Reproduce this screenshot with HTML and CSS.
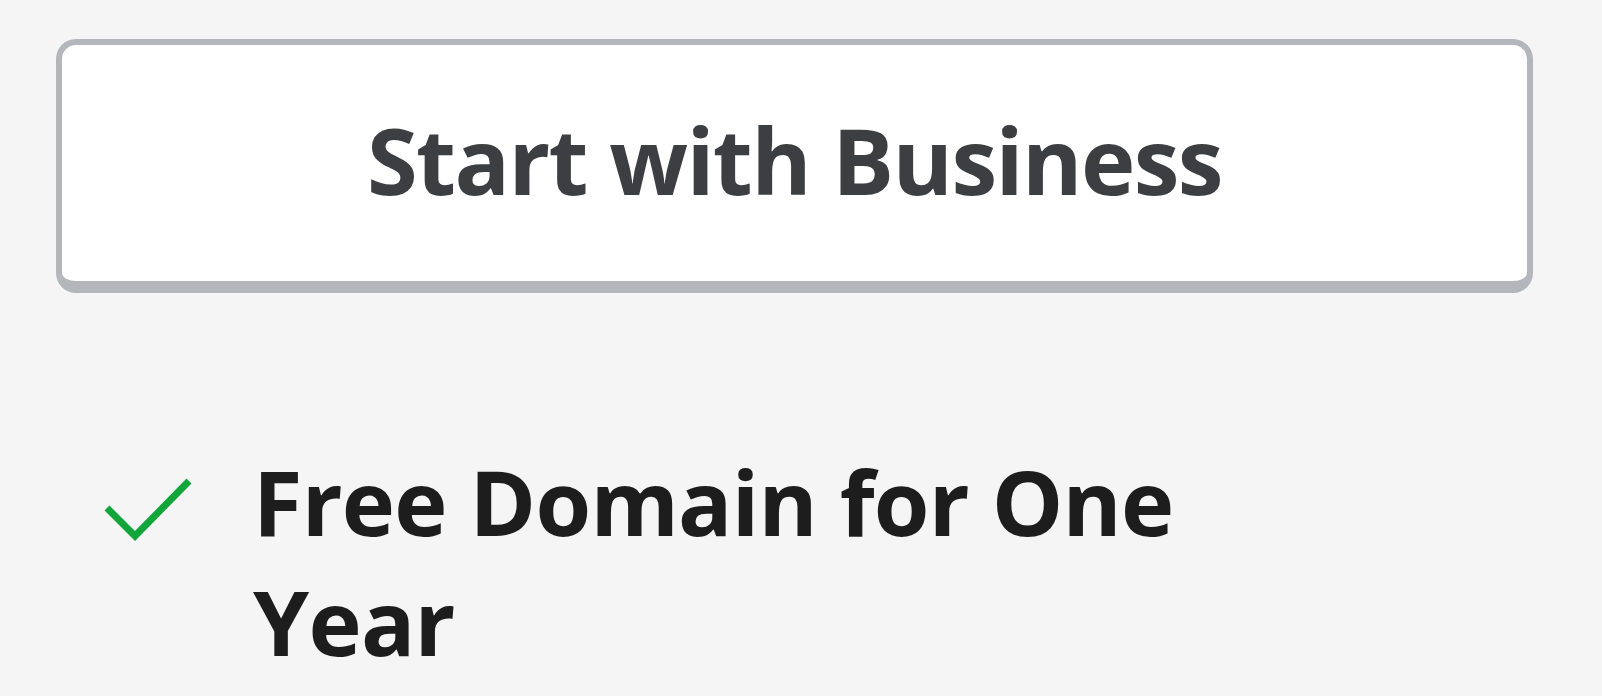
FILE: index.html
```html
<!DOCTYPE html>
<html lang="en">
<head>
    <meta charset="UTF-8">
    <meta name="viewport" content="width=device-width, initial-scale=1.0">
    <title>Business Plan</title>
    <link rel="stylesheet" href="styles.css">
</head>
<body>
    <div class="plan">
        <button class="start-btn">Start with Business</button>

        <ul class="features">
            <li>
                <svg class="check" viewBox="0 0 88 66" width="88" height="66">
                    <polyline points="3,31 31,59 85,4" fill="none" stroke="#12a53a" stroke-width="7"/>
                </svg>
                <span>Free Domain for One Year</span>
            </li>
        </ul>
    </div>
</body>
</html>
```

FILE: styles.css
```css
body {
    font-family: "Open Sans", sans-serif;
    background-color: #f5f5f5;
    margin: 0;
}
.plan {
    padding: 39px 69px 0 56px;
}
.start-btn {
    display: block;
    width: 100%;
    height: 254px;
    background-color: white;
    border: 6px solid #b3b6ba;
    border-bottom-width: 12px;
    border-radius: 20px;
    font-family: "Open Sans", sans-serif;
    font-size: 92px;
    font-weight: bold;
    letter-spacing: -1.6px;
    color: #3c3e42;
    cursor: pointer;
    padding: 0 0 8px;
}
.features {
    list-style: none;
    margin: 0;
    padding: 148px 0 0 48px;
}
.features li {
    display: flex;
    align-items: flex-start;
    max-width: 1100px;
}
.check {
    flex-shrink: 0;
    margin-top: 36px;
    margin-right: 61px;
}
.features span {
    font-size: 90px;
    font-weight: bold;
    letter-spacing: -0.7px;
    line-height: 120px;
    color: #1d1d1d;
}
```
